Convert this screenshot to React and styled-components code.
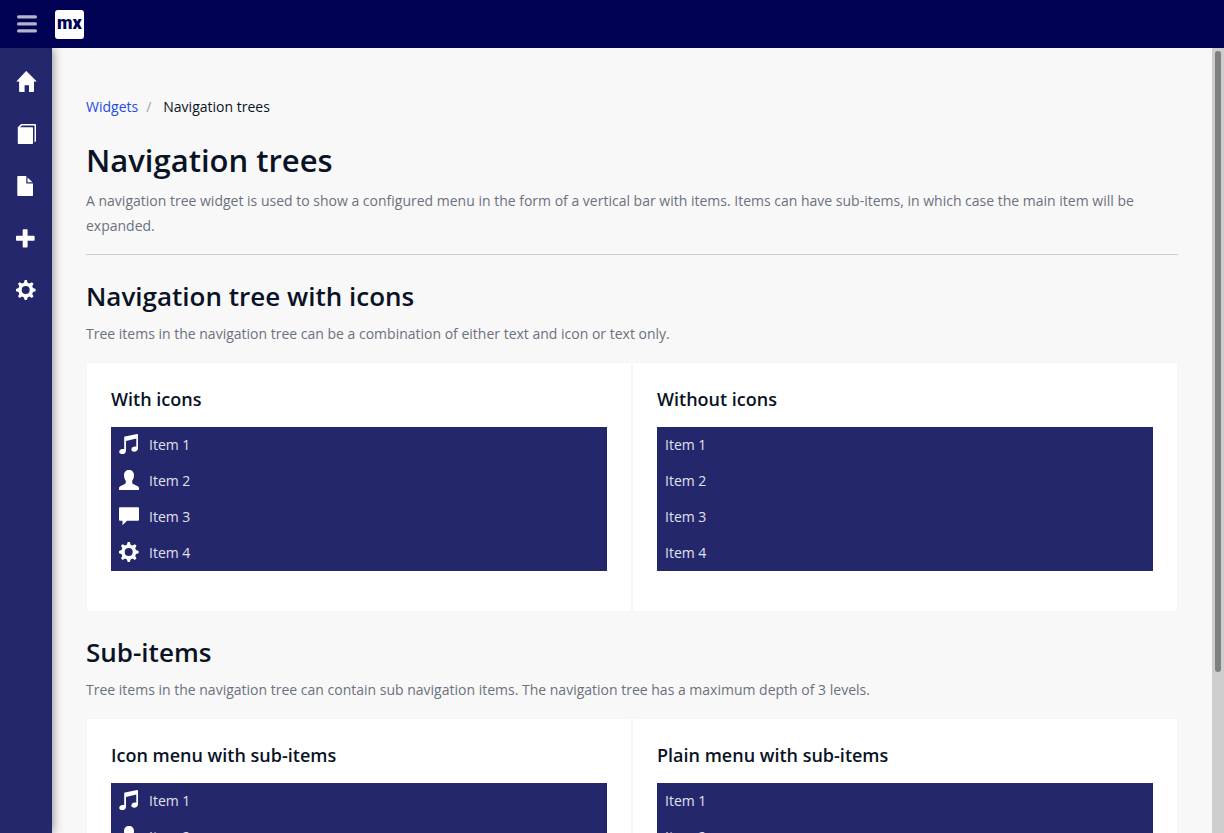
import React, { useEffect, useRef, useState } from "react";
import styled, { createGlobalStyle } from "styled-components";

const GlobalStyle = createGlobalStyle`
  *, *::before, *::after { box-sizing: border-box; }
  html, body, #root { height: 100%; margin: 0; }
  body {
    overflow: hidden;
    background: #f8f8f8;
    color: #0a1325;
    font-family: "Open Sans", sans-serif;
    font-size: 14px;
    line-height: 20px;
  }
`;

const Shell = styled.div`
  display: flex;
  flex-direction: column;
  height: 100vh;
`;

const TopBar = styled.header`
  display: flex;
  align-items: center;
  flex: none;
  gap: 17px;
  height: 48px;
  padding: 0 16px;
  background: #010153;
`;

const MenuToggle = styled.button`
  display: flex;
  padding: 0;
  border: 0;
  background: none;
  color: #b3b3cc;
  cursor: pointer;
`;

const Logo = styled.a`
  display: flex;
  align-items: center;
  justify-content: center;
  width: 29px;
  height: 29px;
  padding-bottom: 2px;
  border-radius: 3px;
  background: #fff;
  color: #010153;
  font: 900 18px/20px Roboto, sans-serif;
  text-decoration: none;
`;

const Body = styled.div`
  display: flex;
  flex: 1;
  min-height: 0;
`;

const SideBar = styled.nav`
  position: relative;
  z-index: 1;
  flex: none;
  width: 52px;
  padding-top: 8px;
  background: #24276c;
  box-shadow: 0 0 10px rgba(0, 0, 0, 0.5);
  clip-path: inset(0 -20px 0 0);
`;

const SideLink = styled.a`
  display: flex;
  align-items: center;
  height: 52px;
  padding-left: 16px;
  color: #fff;
`;

const Main = styled.main`
  flex: 1;
  min-width: 0;
  overflow-y: scroll;
  scrollbar-width: none;
  padding: 48px 34px 64px;
`;

const ScrollTrack = styled.div`
  flex: none;
  width: 12px;
  padding: 3px;
  background: #cdcdcd;
`;

const ScrollThumb = styled.div`
  border-radius: 3px;
  background: #7c8080;
`;

const Breadcrumb = styled.ol`
  display: flex;
  margin: 0 0 24px;
  padding: 0;
  list-style: none;
  line-height: 22px;
`;

const Crumb = styled.li`
  & + &::before {
    content: "/";
    padding: 0 12px 0 8px;
    color: #a0a3ab;
  }
`;

const CrumbLink = styled.a`
  color: #264ae5;
  text-decoration: none;
`;

const PageHeader = styled.div`
  margin-bottom: 24px;
  padding-bottom: 16px;
  border-bottom: 1px solid #cecece;
`;

const PageTitle = styled.h1`
  margin: 0 0 10px;
  font-size: 31px;
  font-weight: 600;
  line-height: 36px;
`;

const Text = styled.p`
  margin: 0;
  color: #6c717e;
  line-height: 25px;
`;

const Section = styled.section`
  & + & { margin-top: 23px; }
`;

const SectionTitle = styled.h2`
  margin: 0 0 8px;
  font-size: 26px;
  font-weight: 600;
  line-height: 34px;
`;

const Cards = styled.div`
  display: grid;
  grid-template-columns: 1fr 1fr;
  margin-top: 16px;
`;

const Card = styled.div`
  padding: 24px 24px 40px;
  border: 1px solid #f6f6f6;
  background: #fff;
`;

const CardTitle = styled.h4`
  margin: 0 0 16px;
  font-size: 18px;
  font-weight: 600;
  line-height: 24px;
`;

const Tree = styled.ul`
  margin: 0;
  padding: 0;
  list-style: none;
  background: #24276c;
`;

const TreeLink = styled.a`
  display: flex;
  align-items: center;
  gap: 10px;
  height: 36px;
  padding: 0 8px;
  color: #e1e1ee;
  text-decoration: none;

  svg {
    margin-bottom: 2px;
    color: #fff;
  }
`;

const Svg = styled.svg`
  display: block;
  flex: none;
  overflow: visible;
  fill: currentColor;
`;

const shapes = {
  home: <path d="M10.6-.8 20.8 9.600H18v9.500c0 .6-.3.9-.8.9H13v-6.800H8.600V20H4c-.6 0-.9-.3-.9-.9V9.600H.3L9.900-.8Q10.300-1.200 10.600-.8Z" />,
  book: (
    <path
      fillRule="evenodd"
      d="M1.800 3.200 5.200.1H19Q20 .1 20 1v16l-1.500 1.400V1.500H6L4 3.200h12.200q.8 0 .8.800v15.200q0 .8-.8.800H2.600q-.8 0-.8-.8Z"
    />
  ),
  file: <path d="M2 0h8.300v7.500h6.700v11.800q0 .7-.7.7H2q-.7 0-.7-.7V.7Q1.300 0 2 0ZM11.500 1.500 16.500 6.300H11.500Z" />,
  plus: <path d="M7.400 1.200h3.400q.8 0 .8.800v5.800h6.300q.7 0 .7.700v3.600q0 .7-.7.700h-6.300v6q0 .8-.8.800H7.400q-.7 0-.7-.7v-6.100H.7q-.7 0-.7-.7V8.500q0-.7.7-.7h6V2q0-.8.7-.8Z" />,
  cog: (
    <path
      fillRule="evenodd"
      d="M8.700 0h2.100l.8 2.700 1.900.8 2.400-1.300 1.600 1.600-1.300 2.400.8 1.900 2.600.8v2.300l-2.600.8-.8 1.900 1.300 2.400-1.600 1.600-2.400-1.300-1.900.8-.8 2.500H8.700l-.8-2.500-1.900-.8-2.400 1.300L2 16.300l1.300-2.400-.8-1.900-2.500-.8V8.900l2.500-.8.800-1.900L2 3.800l1.600-1.600L6 3.500l1.900-.8ZM9.700 6a4 4 0 1 0 0 8 4 4 0 0 0 0-8Z"
    />
  ),
  music: <path d="M5.200 3.300Q5.200 2.700 5.800 2.500L18.200.1Q19 0 19 .8V14.200c0 2.100-1.700 3.600-3.900 3.600-1.700 0-2.700-.9-2.700-2.200 0-1.700 1.600-3 3.600-3 .5 0 .9 0 1.300.2V4.500L7 6.900v9.800c0 2-1.600 3.400-3.500 3.400C1.500 20.100.2 19.300.2 18c0-1.700 1.500-2.900 3.500-2.900.6 0 1 .1 1.500.2Z" />,
  user: <path d="M10 0c3 0 5 2.100 5 5 0 2.200-.6 4.300-1.800 5.800v1.800c0 .6.300 1 .9 1.300l4.700 2.300c.8.400 1.200 1 1.200 1.700v2.100H0v-2.100c0-.7.4-1.300 1.200-1.700l4.700-2.300c.6-.3.900-.7.900-1.300v-1.800C5.600 9.300 5 7.200 5 5c0-2.900 2-5 5-5Z" />,
  comment: <path d="M1 1.200h18q1 0 1 1v11.500q0 1-1 1H8L3.500 19.300v-4.600H1q-1 0-1-1v-11.500q0-1 1-1Z" />,
};

function Icon({ name }) {
  return (
    <Svg width="20" height="20" viewBox="0 0 20 20" aria-hidden="true">
      {shapes[name]}
    </Svg>
  );
}

const sideItems = [
  ["home", "Home"],
  ["book", "Templates"],
  ["file", "Pages"],
  ["plus", "Widgets"],
  ["cog", "Settings"],
];

const treeIcons = ["music", "user", "comment", "cog"];

function NavigationTree({ icons }) {
  return (
    <Tree>
      {treeIcons.map((icon, i) => (
        <li key={icon}>
          <TreeLink href="#">
            {icons && <Icon name={icon} />}
            Item {i + 1}
          </TreeLink>
        </li>
      ))}
    </Tree>
  );
}

function TreeSection({ title, text, withTitle, withoutTitle }) {
  return (
    <Section>
      <SectionTitle>{title}</SectionTitle>
      <Text>{text}</Text>
      <Cards>
        <Card>
          <CardTitle>{withTitle}</CardTitle>
          <NavigationTree icons />
        </Card>
        <Card>
          <CardTitle>{withoutTitle}</CardTitle>
          <NavigationTree />
        </Card>
      </Cards>
    </Section>
  );
}

// Scrolling content with a slim track beside it; the thumb follows the scroll position.
function ScrollArea({ children }) {
  const ref = useRef(null);
  const [thumb, setThumb] = useState({ size: 0, offset: 0 });

  const update = () => {
    const { clientHeight, scrollHeight, scrollTop } = ref.current;
    const scale = (clientHeight - 6) / scrollHeight;
    setThumb({ size: Math.round(clientHeight * scale), offset: Math.round(scrollTop * scale) });
  };

  useEffect(() => {
    update();
    window.addEventListener("resize", update);
    return () => window.removeEventListener("resize", update);
  }, []);

  return (
    <>
      <Main ref={ref} onScroll={update}>
        {children}
      </Main>
      <ScrollTrack aria-hidden="true">
        <ScrollThumb style={{ height: thumb.size, transform: `translateY(${thumb.offset}px)` }} />
      </ScrollTrack>
    </>
  );
}

export default function App() {
  return (
    <>
      <GlobalStyle />
      <Shell>
        <TopBar>
          <MenuToggle aria-label="Toggle sidebar">
            <Svg width="22" height="20" viewBox="0 0 22 20" aria-hidden="true">
              <rect x="1" y="1.200" width="20" height="3.400" rx="1.500" />
              <rect x="1" y="8.200" width="20" height="3.400" rx="1.500" />
              <rect x="1" y="15.200" width="20" height="3.400" rx="1.500" />
            </Svg>
          </MenuToggle>
          <Logo href="#">mx</Logo>
        </TopBar>
        <Body>
          <SideBar aria-label="Main">
            {sideItems.map(([icon, label]) => (
              <SideLink key={icon} href="#" aria-label={label}>
                <Icon name={icon} />
              </SideLink>
            ))}
          </SideBar>
          <ScrollArea>
            <Breadcrumb>
              <Crumb>
                <CrumbLink href="#">Widgets</CrumbLink>
              </Crumb>
              <Crumb>Navigation trees</Crumb>
            </Breadcrumb>
            <PageHeader>
              <PageTitle>Navigation trees</PageTitle>
              <Text>
                A navigation tree widget is used to show a configured menu in the form of a vertical bar with items.
                Items can have sub-items, in which case the main item will be expanded.
              </Text>
            </PageHeader>
            <TreeSection
              title="Navigation tree with icons"
              text="Tree items in the navigation tree can be a combination of either text and icon or text only."
              withTitle="With icons"
              withoutTitle="Without icons"
            />
            <TreeSection
              title="Sub-items"
              text="Tree items in the navigation tree can contain sub navigation items. The navigation tree has a maximum depth of 3 levels."
              withTitle="Icon menu with sub-items"
              withoutTitle="Plain menu with sub-items"
            />
          </ScrollArea>
        </Body>
      </Shell>
    </>
  );
}
